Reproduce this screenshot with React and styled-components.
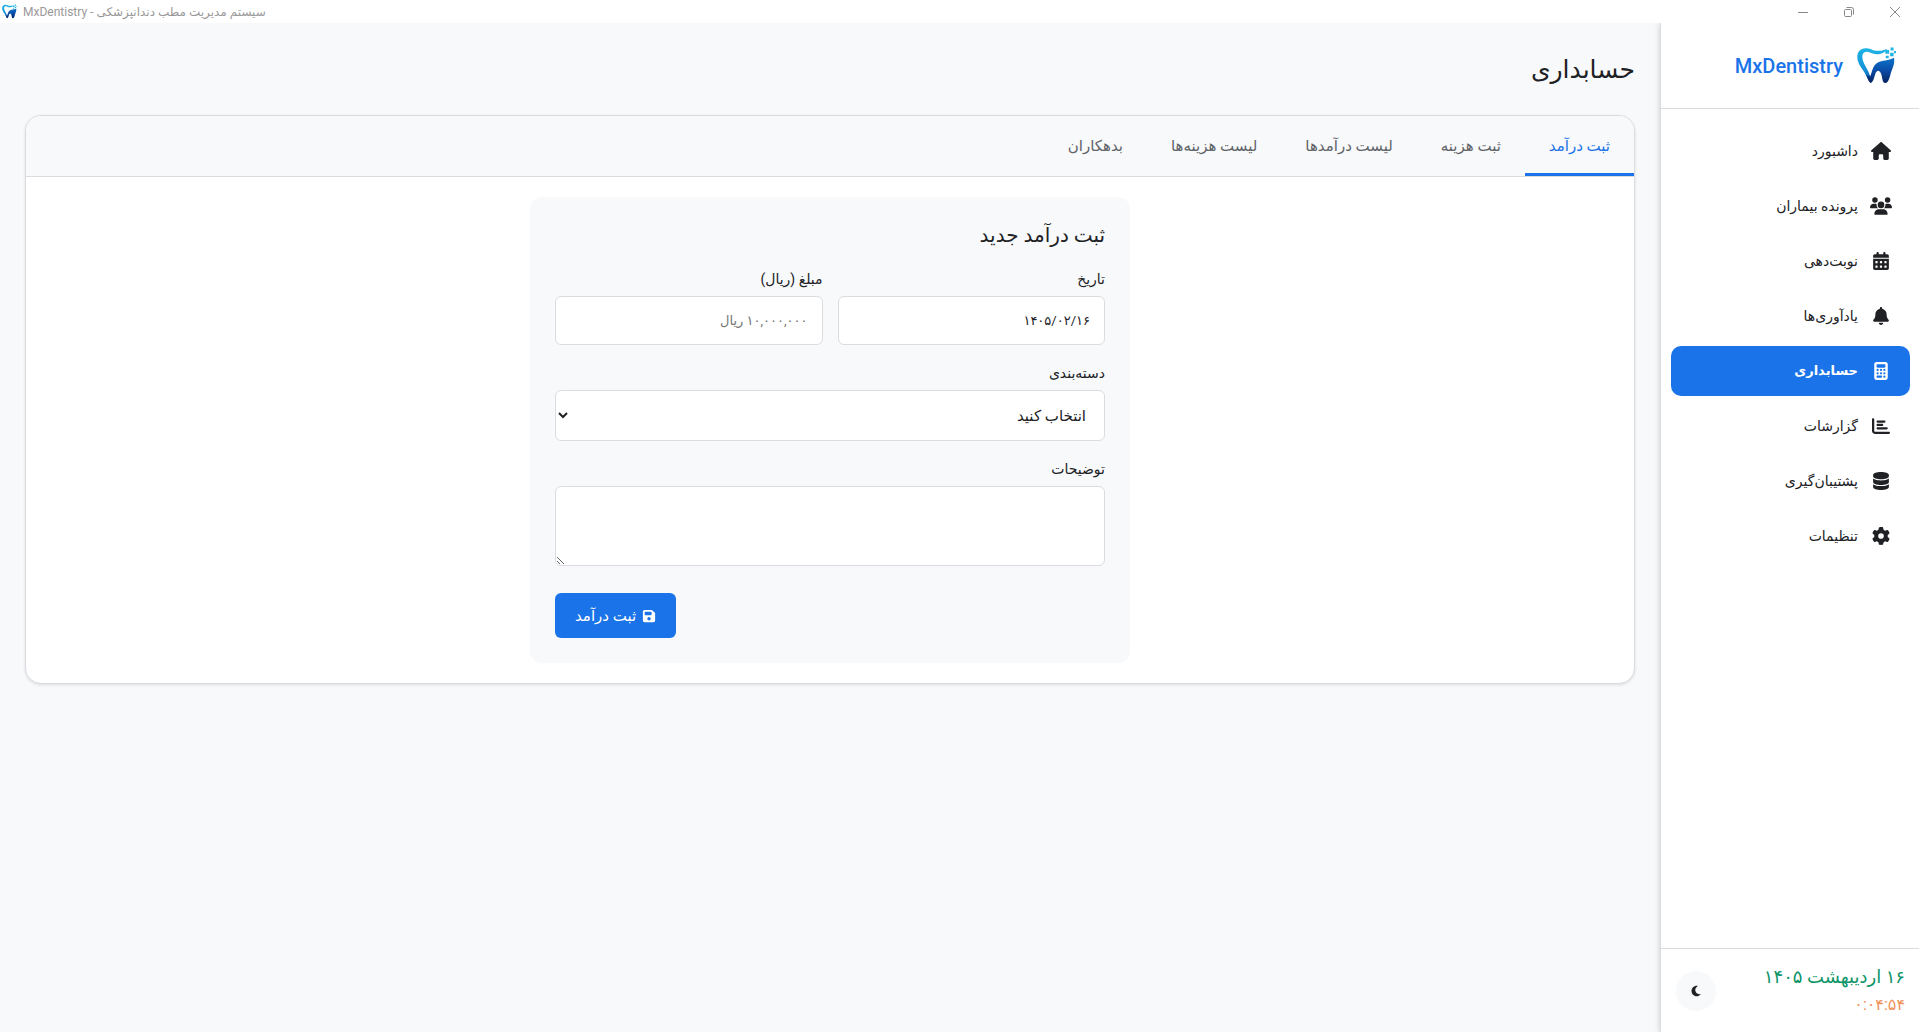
import React from "react";
import styled, { createGlobalStyle } from "styled-components";
import {
  FaHouse, FaUsers, FaCalendarDays, FaBell, FaCalculator,
  FaDatabase, FaGear, FaFloppyDisk, FaMoon, FaChartBar,
} from "react-icons/fa6";

const Global = createGlobalStyle`
  *, *::before, *::after { box-sizing: border-box; }
  body { margin: 0; background: #f8f9fb; color: #202124; font-family: Roboto, "DejaVu Sans", sans-serif; font-size: 15px; line-height: 24px; }
  button, input, select, textarea { font: inherit; color: inherit; margin: 0; }
`;

const Window = styled.div`
  display: flex;
  flex-direction: column;
  min-height: 100vh;
`;

const TitleBar = styled.header`
  display: flex;
  align-items: center;
  justify-content: space-between;
  height: 23px;
  background: #fff;
  color: #999;
  padding: 0 1px 0 2px;
`;

const AppName = styled.div`
  display: flex;
  align-items: center;
  gap: 6px;
  font-size: 12px;
`;

const WindowButtons = styled.div`
  display: flex;
`;

const WindowButton = styled.button`
  display: grid;
  place-items: center;
  width: 46px;
  height: 23px;
  padding: 0;
  border: 0;
  background: none;
`;

const Body = styled.div`
  direction: rtl;
  display: flex;
  flex: 1;
`;

const Sidebar = styled.aside`
  display: flex;
  flex-direction: column;
  flex: none;
  width: 259px;
  background: #fff;
  border-left: 1px solid #dadce0;
  box-shadow: 0 1px 6px rgba(60, 64, 67, 0.25);
  clip-path: inset(0 0 0 -12px);
`;

const Brand = styled.div`
  display: flex;
  align-items: center;
  gap: 14px;
  height: 86px;
  padding: 0 23px;
  border-bottom: 1px solid #dadce0;
  color: #1a73e8;
  font-size: 20px;
  font-weight: 500;
`;

const Nav = styled.nav`
  display: flex;
  flex-direction: column;
  gap: 5px;
  flex: 1;
  padding: 17px 9px 17px 10px;
`;

const NavLink = styled.a`
  display: flex;
  align-items: center;
  gap: 12px;
  height: 50px;
  padding: 0 18px;
  border-radius: 10px;
  text-decoration: none;
  font-size: ${(p) => (p.$active ? "13px" : "14px")};
  font-weight: ${(p) => (p.$active ? 700 : 400)};
  color: ${(p) => (p.$active ? "#fff" : "#202124")};
  background: ${(p) => (p.$active ? "#1a73e8" : "transparent")};
`;

const NavIcon = styled.span`
  display: grid;
  place-items: center;
  width: 22px;
  svg { display: block; }
`;

const SideFooter = styled.div`
  display: flex;
  align-items: center;
  justify-content: space-between;
  height: 84px;
  padding: 0 14px 0 15px;
  border-top: 1px solid #dadce0;
`;

const Today = styled.div`
  color: #0d9467;
  font-size: 18px;
  font-weight: 500;
  line-height: 28px;
`;

const Clock = styled.div`
  color: #f0935a;
  font-size: 16px;
  line-height: 28px;
`;

const ThemeButton = styled.button`
  display: grid;
  place-items: center;
  width: 40px;
  height: 40px;
  padding: 0;
  border: 0;
  border-radius: 50%;
  background: #f8f9fb;
`;

const Main = styled.main`
  flex: 1;
  min-width: 0;
  padding: 24px 25px;
`;

const PageTitle = styled.h1`
  margin: 0 0 22px;
  font-size: 25px;
  font-weight: 400;
  line-height: 46px;
`;

const Card = styled.section`
  overflow: hidden;
  background: #fff;
  border: 1px solid #dadce0;
  border-radius: 16px;
  box-shadow: 0 1px 3px rgba(60, 64, 67, 0.15);
`;

const Tabs = styled.div`
  display: flex;
  background: #f8f9fb;
  border-bottom: 1px solid #dadce0;
`;

const Tab = styled.button`
  height: 60px;
  padding: 0 24px;
  border: 0;
  border-top: 2px solid transparent;
  border-bottom: 3px solid ${(p) => (p.$active ? "#1a73e8" : "transparent")};
  background: none;
  color: ${(p) => (p.$active ? "#1a73e8" : "#5f6368")};
  white-space: nowrap;
`;

const Panel = styled.div`
  padding: 20px;
`;

const Form = styled.form`
  display: flex;
  flex-direction: column;
  max-width: 600px;
  margin: 0 auto;
  padding: 25px;
  border-radius: 12px;
  background: #f8f9fb;
`;

const FormTitle = styled.h2`
  margin: 0 0 21px;
  font-size: 20px;
  font-weight: 400;
  line-height: 26px;
`;

const Row = styled.div`
  display: grid;
  grid-template-columns: 1fr 1fr;
  gap: 15px;
`;

const Field = styled.div`
  display: flex;
  flex-direction: column;
  margin-bottom: 18px;
`;

const Label = styled.label`
  margin-bottom: 6px;
  font-size: 14px;
  line-height: 21px;
`;

const boxed = `
  width: 100%;
  border: 1px solid #dadce0;
  border-radius: 6px;
  background: #fff;
`;

const Input = styled.input`
  ${boxed}
  height: 49px;
  padding: 0 14px;
  font-size: 13px;
  &::placeholder { color: #757575; }
`;

const Select = styled.select`
  ${boxed}
  height: 51px;
  padding: 0 14px;
`;

const TextArea = styled.textarea`
  ${boxed}
  display: block;
  height: 80px;
  padding: 12px 14px;
  resize: vertical;
`;

const Submit = styled.button`
  display: flex;
  align-items: center;
  gap: 6px;
  align-self: flex-end;
  height: 45px;
  margin-top: 9px;
  padding: 0 20px;
  border: 0;
  border-radius: 6px;
  background: #1a73e8;
  color: #fff;
  font-weight: 500;
`;

const ToothLogo = ({ size, id }) => (
  <svg width={size} height={size} viewBox="0 0 40 38" aria-hidden="true">
    <defs>
      <linearGradient id={id + "Wall"} x1="0" y1="0" x2="0" y2="1">
        <stop offset="0" stopColor="#1fb4e6" />
        <stop offset="0.6" stopColor="#1592d8" />
        <stop offset="1" stopColor="#0b4fa6" />
      </linearGradient>
      <linearGradient id={id + "Root"} x1="0" y1="0" x2="0" y2="1">
        <stop offset="0" stopColor="#0b74cc" />
        <stop offset="0.5" stopColor="#0a4ca6" />
        <stop offset="1" stopColor="#06225f" />
      </linearGradient>
    </defs>
    <path fill={`url(#${id}Wall)`} d="M14 37C10 32 9 27 5 22 0 15-1 9 2 4.500c3-4 8-4 13-2C20 5 25 4 31 2 28 7 20 9 14 6 10 4 6 5 5.500 9c-.5 6 4 11 6 16 1.500 3 1.500 5 3.500 7z" />
    <path fill={`url(#${id}Root)`} d="M38 11c1 7-2 11-3.500 16.500C33.500 32 32 37 29 37c-3.500 0-2.500-5.500-4.500-10-1.500-3.500-4-3.500-5.500 0-1.500 4-2 9-5 10-2-1-3.500-5-4.500-8.500L13.500 30c2-3 2-10 7-13.500C26 13 32 14.500 38 11z" />
    <path fill="#1fb4e6" d="M29 3h4v4h-4zM34.500 .5h3v3h-3zM34 6h3.500v3.500H34zM38 4h2v2.500h-2zM29.500 9h3v2.500h-3z" />
  </svg>
);

const NAV = [
  ["داشبورد", FaHouse, 20],
  ["پرونده بیماران", FaUsers, 22],
  ["نوبت‌دهی", FaCalendarDays, 18],
  ["یادآوری‌ها", FaBell, 18],
  ["حسابداری", FaCalculator, 18],
  ["گزارشات", FaChartBar, 18],
  ["پشتیبان‌گیری", FaDatabase, 18],
  ["تنظیمات", FaGear, 18],
];

const TABS = ["ثبت درآمد", "ثبت هزینه", "لیست درآمدها", "لیست هزینه‌ها", "بدهکاران"];

export default function App() {
  return (
    <Window>
      <Global />
      <TitleBar>
        <AppName>
          <ToothLogo size={15} id="small" />
          <span>MxDentistry - سیستم مدیریت مطب دندانپزشکی</span>
        </AppName>
        <WindowButtons>
          <WindowButton aria-label="Minimize">
            <svg width="10" height="10" fill="none" stroke="#888"><path d="M0 5.500h10" /></svg>
          </WindowButton>
          <WindowButton aria-label="Restore">
            <svg width="10" height="10" fill="none" stroke="#888"><rect x="0.500" y="2.500" width="7" height="7" rx="1" /><path d="M2.500 .5h5a2 2 0 0 1 2 2v5" /></svg>
          </WindowButton>
          <WindowButton aria-label="Close">
            <svg width="10" height="10" fill="none" stroke="#888"><path d="M0 0l10 10M10 0L0 10" /></svg>
          </WindowButton>
        </WindowButtons>
      </TitleBar>
      <Body lang="fa">
        <Sidebar>
          <Brand>
            <ToothLogo size={39} id="brand" />
            <span>MxDentistry</span>
          </Brand>
          <Nav>
            {NAV.map(([text, Icon, size], i) => (
              <NavLink key={text} href="#" $active={i === 4}>
                <NavIcon><Icon size={size} /></NavIcon>
                {text}
              </NavLink>
            ))}
          </Nav>
          <SideFooter>
            <div>
              <Today>۱۶ اردیبهشت ۱۴۰۵</Today>
              <Clock>۰:۰۴:۵۴</Clock>
            </div>
            <ThemeButton aria-label="حالت تاریک"><FaMoon size={12} /></ThemeButton>
          </SideFooter>
        </Sidebar>
        <Main>
          <PageTitle>حسابداری</PageTitle>
          <Card>
            <Tabs role="tablist">
              {TABS.map((t, i) => (
                <Tab key={t} role="tab" aria-selected={i === 0} $active={i === 0}>{t}</Tab>
              ))}
            </Tabs>
            <Panel>
              <Form>
                <FormTitle>ثبت درآمد جدید</FormTitle>
                <Row>
                  <Field>
                    <Label htmlFor="date">تاریخ</Label>
                    <Input id="date" defaultValue="۱۴۰۵/۰۲/۱۶" />
                  </Field>
                  <Field>
                    <Label htmlFor="amount">مبلغ (ریال)</Label>
                    <Input id="amount" placeholder="۱۰,۰۰۰,۰۰۰ ریال" />
                  </Field>
                </Row>
                <Field>
                  <Label htmlFor="category">دسته‌بندی</Label>
                  <Select id="category"><option>انتخاب کنید</option></Select>
                </Field>
                <Field>
                  <Label htmlFor="notes">توضیحات</Label>
                  <TextArea id="notes" />
                </Field>
                <Submit type="button"><FaFloppyDisk size={14} />ثبت درآمد</Submit>
              </Form>
            </Panel>
          </Card>
        </Main>
      </Body>
    </Window>
  );
}
